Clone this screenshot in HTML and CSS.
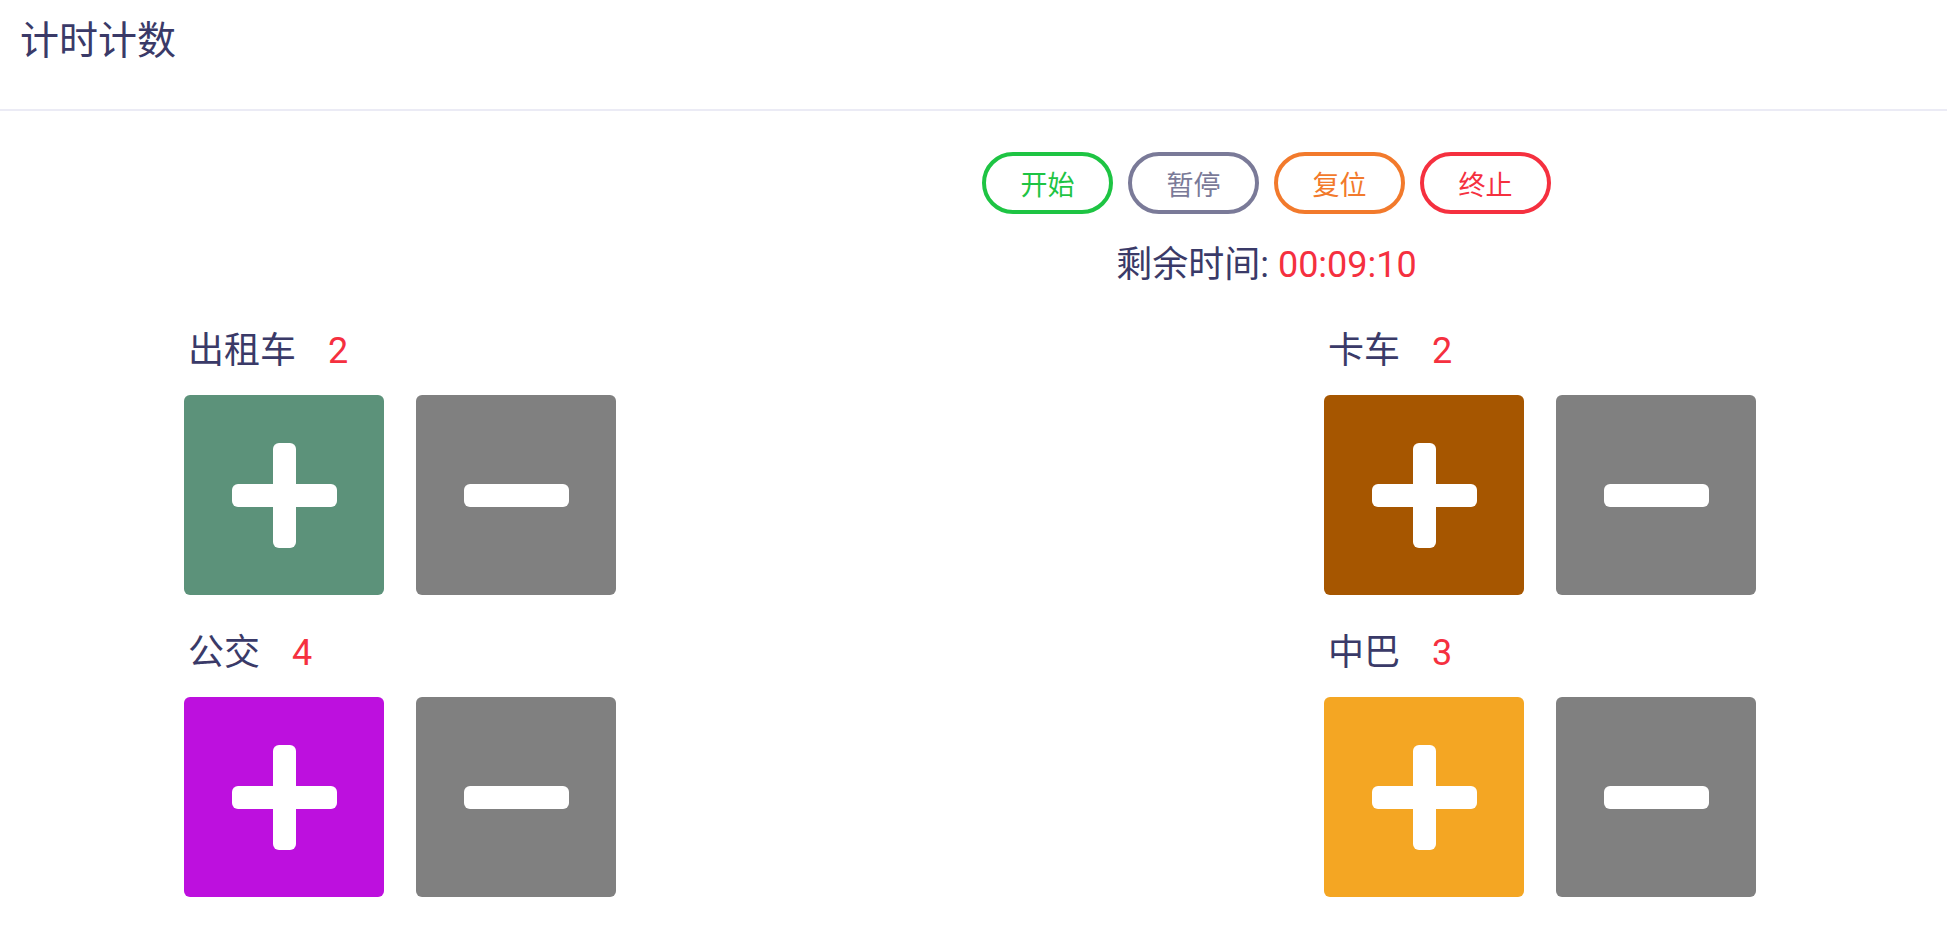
FILE: index.html
```html
<!DOCTYPE html>
<html lang="zh">
<head>
<meta charset="utf-8">
<title>计时计数</title>
<link rel="stylesheet" href="styles.css">
</head>
<body>
<header class="topbar">
  <h1 class="title">计时计数</h1>
</header>
<main class="main">
  <section class="controls">
    <div class="btns">
      <button class="pill pill-green">开始</button>
      <button class="pill pill-gray">暂停</button>
      <button class="pill pill-orange">复位</button>
      <button class="pill pill-red">终止</button>
    </div>
    <div class="timer">剩余时间: <span class="timer-val">00:09:10</span></div>
  </section>
  <section class="board">
    <div class="col">
      <div class="group">
        <div class="label"><span class="name">出租车</span><span class="count">2</span></div>
        <div class="pads">
          <button class="pad pad-green"><span class="bar bar-h"></span><span class="bar bar-v"></span></button>
          <button class="pad pad-gray"><span class="bar bar-h"></span></button>
        </div>
      </div>
      <div class="group">
        <div class="label"><span class="name">公交</span><span class="count">4</span></div>
        <div class="pads">
          <button class="pad pad-purple"><span class="bar bar-h"></span><span class="bar bar-v"></span></button>
          <button class="pad pad-gray"><span class="bar bar-h"></span></button>
        </div>
      </div>
    </div>
    <div class="col">
      <div class="group">
        <div class="label"><span class="name">卡车</span><span class="count">2</span></div>
        <div class="pads">
          <button class="pad pad-brown"><span class="bar bar-h"></span><span class="bar bar-v"></span></button>
          <button class="pad pad-gray"><span class="bar bar-h"></span></button>
        </div>
      </div>
      <div class="group">
        <div class="label"><span class="name">中巴</span><span class="count">3</span></div>
        <div class="pads">
          <button class="pad pad-amber"><span class="bar bar-h"></span><span class="bar bar-v"></span></button>
          <button class="pad pad-gray"><span class="bar bar-h"></span></button>
        </div>
      </div>
    </div>
  </section>
</main>
</body>
</html>
```
FILE: styles.css
```css
* { box-sizing: border-box; }
html, body { margin: 0; padding: 0; background: #fff; }
body {
  font-family: Roboto, "Noto Sans CJK SC", sans-serif;
  color: #3a3a68;
  overflow: hidden;
}
.topbar {
  height: 111px;
  border-bottom: 2px solid #ebebf5;
  padding: 22px 0 0 20px;
}
.title {
  margin: 0;
  font-size: 39px;
  line-height: 39px;
  font-weight: 400;
  color: #3a3a68;
}
.controls {
  margin-left: 586px;
  padding-top: 41px;
  display: flex;
  flex-direction: column;
  align-items: center;
}
.btns { display: flex; gap: 15px; }
.pill {
  width: 131px;
  height: 62px;
  border-radius: 31px;
  border: 4px solid;
  background: #fff;
  font-family: Roboto, "Noto Sans CJK SC", sans-serif;
  font-size: 27px;
  padding: 0;
  cursor: pointer;
}
.pill-green { border-color: #1ec443; color: #1ec443; }
.pill-gray { border-color: #7a7a98; color: #7a7a98; }
.pill-orange { border-color: #f27a2c; color: #f27a2c; }
.pill-red { border-color: #f5303f; color: #f5303f; }
.timer {
  margin-top: 31px;
  font-size: 36px;
  line-height: 40px;
}
.timer-val { color: #f5303f; }
.board {
  display: flex;
  justify-content: space-between;
  padding: 0 191px 0 184px;
  margin-top: 46px;
}
.col { display: flex; flex-direction: column; gap: 38px; }
.label {
  display: flex;
  align-items: baseline;
  padding-left: 4px;
  font-size: 36px;
  line-height: 40px;
}
.count { color: #f5303f; margin-left: 32px; }
.pads { display: flex; gap: 32px; margin-top: 24px; }
.pad {
  position: relative;
  width: 200px;
  height: 200px;
  border: 0;
  border-radius: 6px;
  padding: 0;
  cursor: pointer;
}
.pad-green { background: #5c927a; }
.pad-brown { background: #a65600; }
.pad-purple { background: #bd10de; }
.pad-amber { background: #f4a623; }
.pad-gray { background: #808080; }
.bar {
  position: absolute;
  background: #fff;
  border-radius: 6px;
  left: 50%;
  top: 50%;
}
.bar-h { width: 105px; height: 23px; margin: -11.5px 0 0 -52.5px; }
.bar-v { width: 23px; height: 105px; margin: -52.5px 0 0 -11.5px; }
```
